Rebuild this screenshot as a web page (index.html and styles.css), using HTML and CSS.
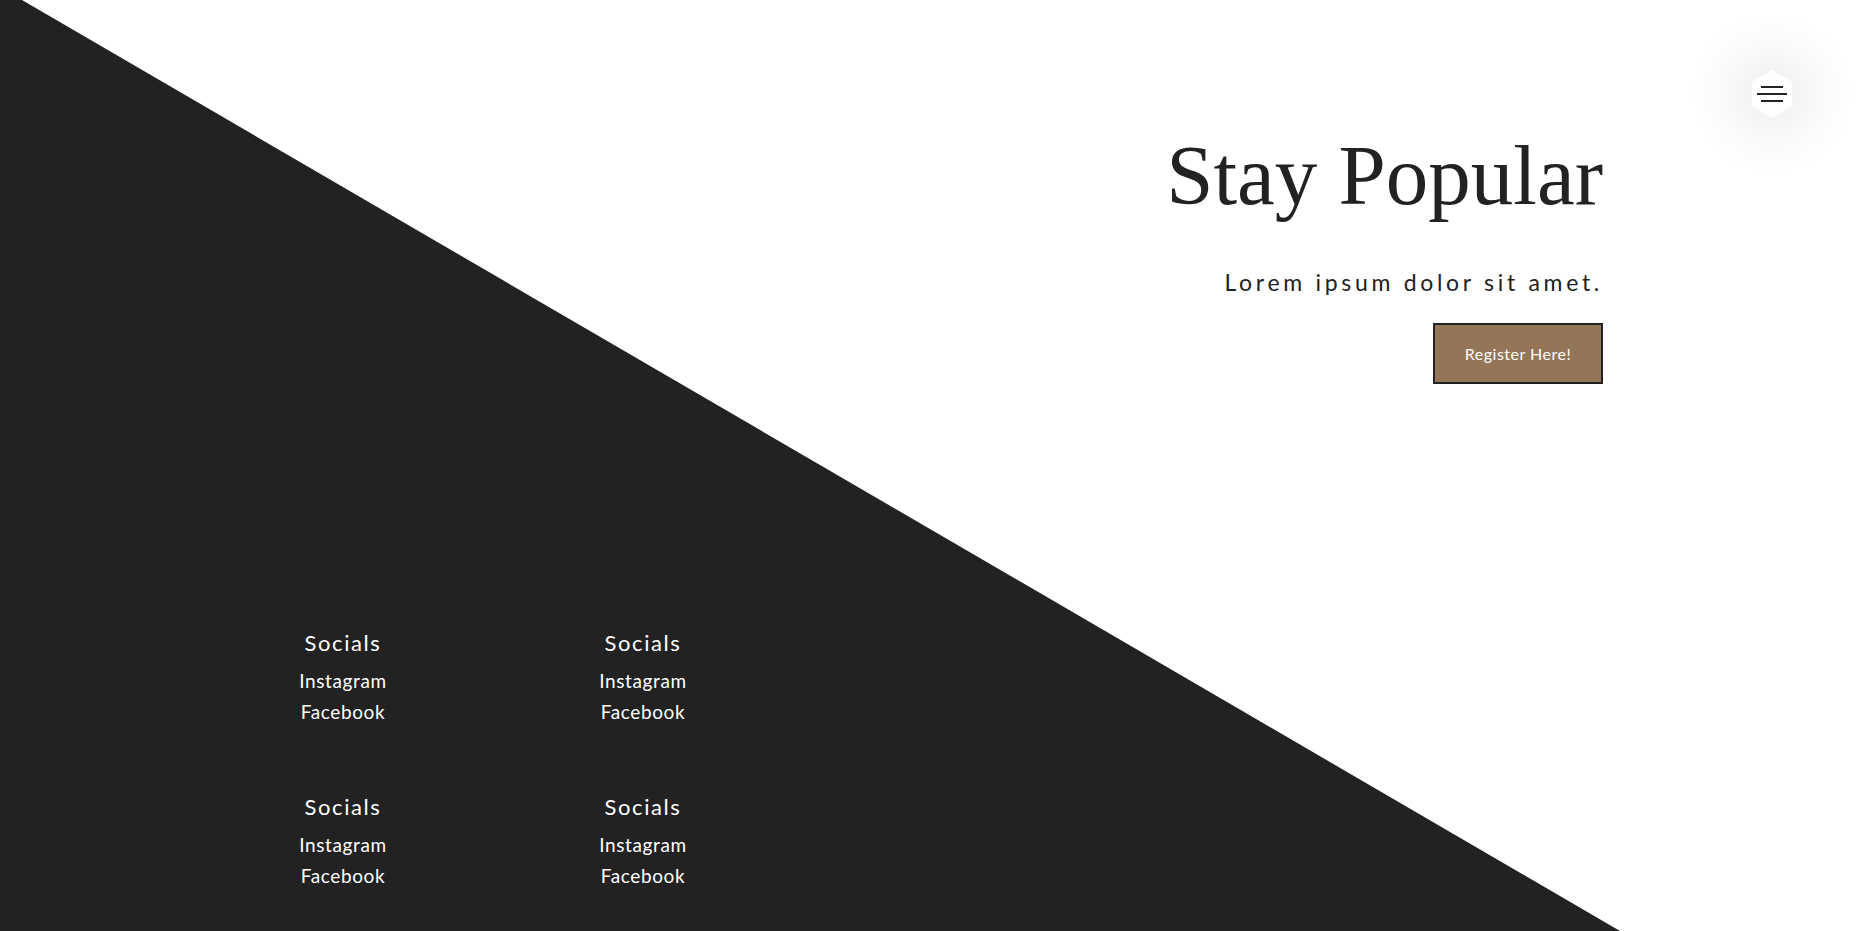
FILE: index.html
```html
<!DOCTYPE html>
<html lang="en">
<head>
<meta charset="utf-8">
<title>Stay Popular</title>
<link rel="stylesheet" href="styles.css">
</head>
<body>
<div class="page">
  <div class="menu-btn">
    <svg class="hex" width="44" height="50" viewBox="0 0 44 50">
      <polygon points="22,2 41,13.5 41,36.5 22,48 3,36.5 3,13.5" fill="#fff" stroke="#fff" stroke-width="2" stroke-linejoin="round"/>
      <line x1="11" y1="18" x2="33" y2="18" stroke="#222" stroke-width="2"/>
      <line x1="7" y1="25" x2="37" y2="25" stroke="#222" stroke-width="2"/>
      <line x1="11" y1="32" x2="33" y2="32" stroke="#222" stroke-width="2"/>
    </svg>
  </div>
  <header class="hero">
    <h1 class="title">Stay Popular</h1>
    <p class="lead">Lorem ipsum dolor sit amet.</p>
    <a class="btn" href="#">Register Here!</a>
  </header>
  <footer class="socials">
    <div class="group">
      <h3 class="group-title">Socials</h3>
      <a class="link" href="#">Instagram</a>
      <a class="link" href="#">Facebook</a>
    </div>
    <div class="group">
      <h3 class="group-title">Socials</h3>
      <a class="link" href="#">Instagram</a>
      <a class="link" href="#">Facebook</a>
    </div>
    <div class="group">
      <h3 class="group-title">Socials</h3>
      <a class="link" href="#">Instagram</a>
      <a class="link" href="#">Facebook</a>
    </div>
    <div class="group">
      <h3 class="group-title">Socials</h3>
      <a class="link" href="#">Instagram</a>
      <a class="link" href="#">Facebook</a>
    </div>
  </footer>
</div>
</body>
</html>
```

FILE: styles.css
```css
* { box-sizing: border-box; }
html, body { margin: 0; padding: 0; }
body {
  background: #fff;
  font-family: "Lato", "Noto Sans", sans-serif;
  color: #222;
}
.page {
  position: relative;
  height: 100vh;
  min-height: 931px;
  overflow: hidden;
  display: flex;
  flex-direction: column;
}
.page::before {
  content: "";
  position: absolute;
  inset: 0;
  background: #222;
  clip-path: polygon(0 0, 22px 0, 1620px 100%, 0 100%);
  z-index: 0;
}
.menu-btn {
  position: absolute;
  top: 14px;
  left: 1692px;
  width: 160px;
  height: 160px;
  border-radius: 50%;
  background: radial-gradient(circle closest-side, rgba(0,0,0,0.065) 0%, rgba(0,0,0,0.045) 30%, rgba(0,0,0,0.02) 62%, rgba(0,0,0,0) 100%);
  display: flex;
  align-items: center;
  justify-content: center;
  z-index: 2;
}
.hex { display: block; }
.hero {
  position: relative;
  z-index: 1;
  display: flex;
  flex-direction: column;
  align-items: flex-end;
  padding: 133px 259px 0 0;
}
.title {
  margin: 0;
  font-family: "Liberation Serif", serif;
  font-weight: 400;
  font-size: 85px;
  line-height: 85px;
  color: #222;
}
.lead {
  margin: 51px 0 0;
  font-size: 23px;
  line-height: 27px;
  letter-spacing: 3.7px;
  color: #222;
}
.btn {
  margin-top: 27px;
  width: 170px;
  height: 61px;
  display: flex;
  align-items: center;
  justify-content: center;
  background: #957557;
  border: 2px solid #222;
  color: #fff;
  text-decoration: none;
  font-size: 16px;
  letter-spacing: 0.5px;
}
.socials {
  position: relative;
  z-index: 1;
  margin-top: auto;
  padding: 0 0 40px 243px;
  display: grid;
  grid-template-columns: 200px 200px;
  column-gap: 100px;
  row-gap: 65px;
}
.group {
  display: flex;
  flex-direction: column;
  align-items: center;
}
.group-title {
  margin: 0 0 7px;
  font-weight: 400;
  font-size: 22px;
  line-height: 30px;
  letter-spacing: 1.6px;
  color: #fff;
}
.link {
  font-size: 19px;
  line-height: 31px;
  letter-spacing: 0.6px;
  color: #fff;
  text-decoration: none;
}
```
